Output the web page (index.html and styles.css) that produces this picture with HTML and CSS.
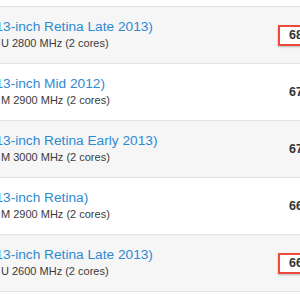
FILE: index.html
```html
<!DOCTYPE html>
<html>
<head>
<meta charset="utf-8">
<link rel="stylesheet" href="styles.css">
</head>
<body>
<div class="list">
  <div class="row alt">
    <div class="info">
      <div class="title">13-inch Retina Late 2013)</div>
      <div class="sub">U 2800 MHz (2 cores)</div>
    </div>
    <div class="score"><span class="mark">6842</span></div>
  </div>
  <div class="row">
    <div class="info">
      <div class="title">13-inch Mid 2012)</div>
      <div class="sub">M 2900 MHz (2 cores)</div>
    </div>
    <div class="score"><span>6741</span></div>
  </div>
  <div class="row alt">
    <div class="info">
      <div class="title">13-inch Retina Early 2013)</div>
      <div class="sub">M 3000 MHz (2 cores)</div>
    </div>
    <div class="score"><span>6712</span></div>
  </div>
  <div class="row">
    <div class="info">
      <div class="title">13-inch Retina)</div>
      <div class="sub">M 2900 MHz (2 cores)</div>
    </div>
    <div class="score"><span>6633</span></div>
  </div>
  <div class="row alt">
    <div class="info">
      <div class="title">13-inch Retina Late 2013)</div>
      <div class="sub">U 2600 MHz (2 cores)</div>
    </div>
    <div class="score"><span class="mark">6604</span></div>
  </div>
</div>
</body>
</html>
```
FILE: styles.css
```css
html, body {
  margin: 0;
  padding: 0;
  background: #ffffff;
  overflow: hidden;
}
body {
  font-family: "Liberation Sans", Arial, Helvetica, sans-serif;
  width: 300px;
  height: 300px;
}
.list {
  padding-top: 6px;
}
.row {
  display: flex;
  height: 56px;
  border-top: 1px solid #e2e2e2;
  background: #ffffff;
}
.row:last-child {
  border-bottom: 1px solid #e2e2e2;
}
.row.alt {
  background: #f6f6f6;
}
.info {
  width: 280px;
  flex: none;
  overflow: hidden;
  padding-top: 11px;
  box-sizing: border-box;
}
.title {
  font-size: 13.7px;
  line-height: 17px;
  color: #2f8ad0;
  margin-left: -4.6px;
  white-space: nowrap;
}
.sub {
  font-size: 11px;
  line-height: 14px;
  color: #3a3a3a;
  margin-top: 1px;
  margin-left: 1px;
  white-space: nowrap;
}
.score {
  flex: none;
  display: flex;
  align-items: center;
  font-size: 12.5px;
  font-weight: bold;
  color: #333333;
  white-space: nowrap;
}
.score span {
  display: block;
  padding: 1.5px 8px 1.5px 9px;
  border: 2px solid transparent;
  margin-left: -2px;
}
.score .mark {
  border-color: #ee4a3c;
  background: #ffffff;
  box-shadow: 0 1px 2px rgba(0, 0, 0, 0.25);
}
```
